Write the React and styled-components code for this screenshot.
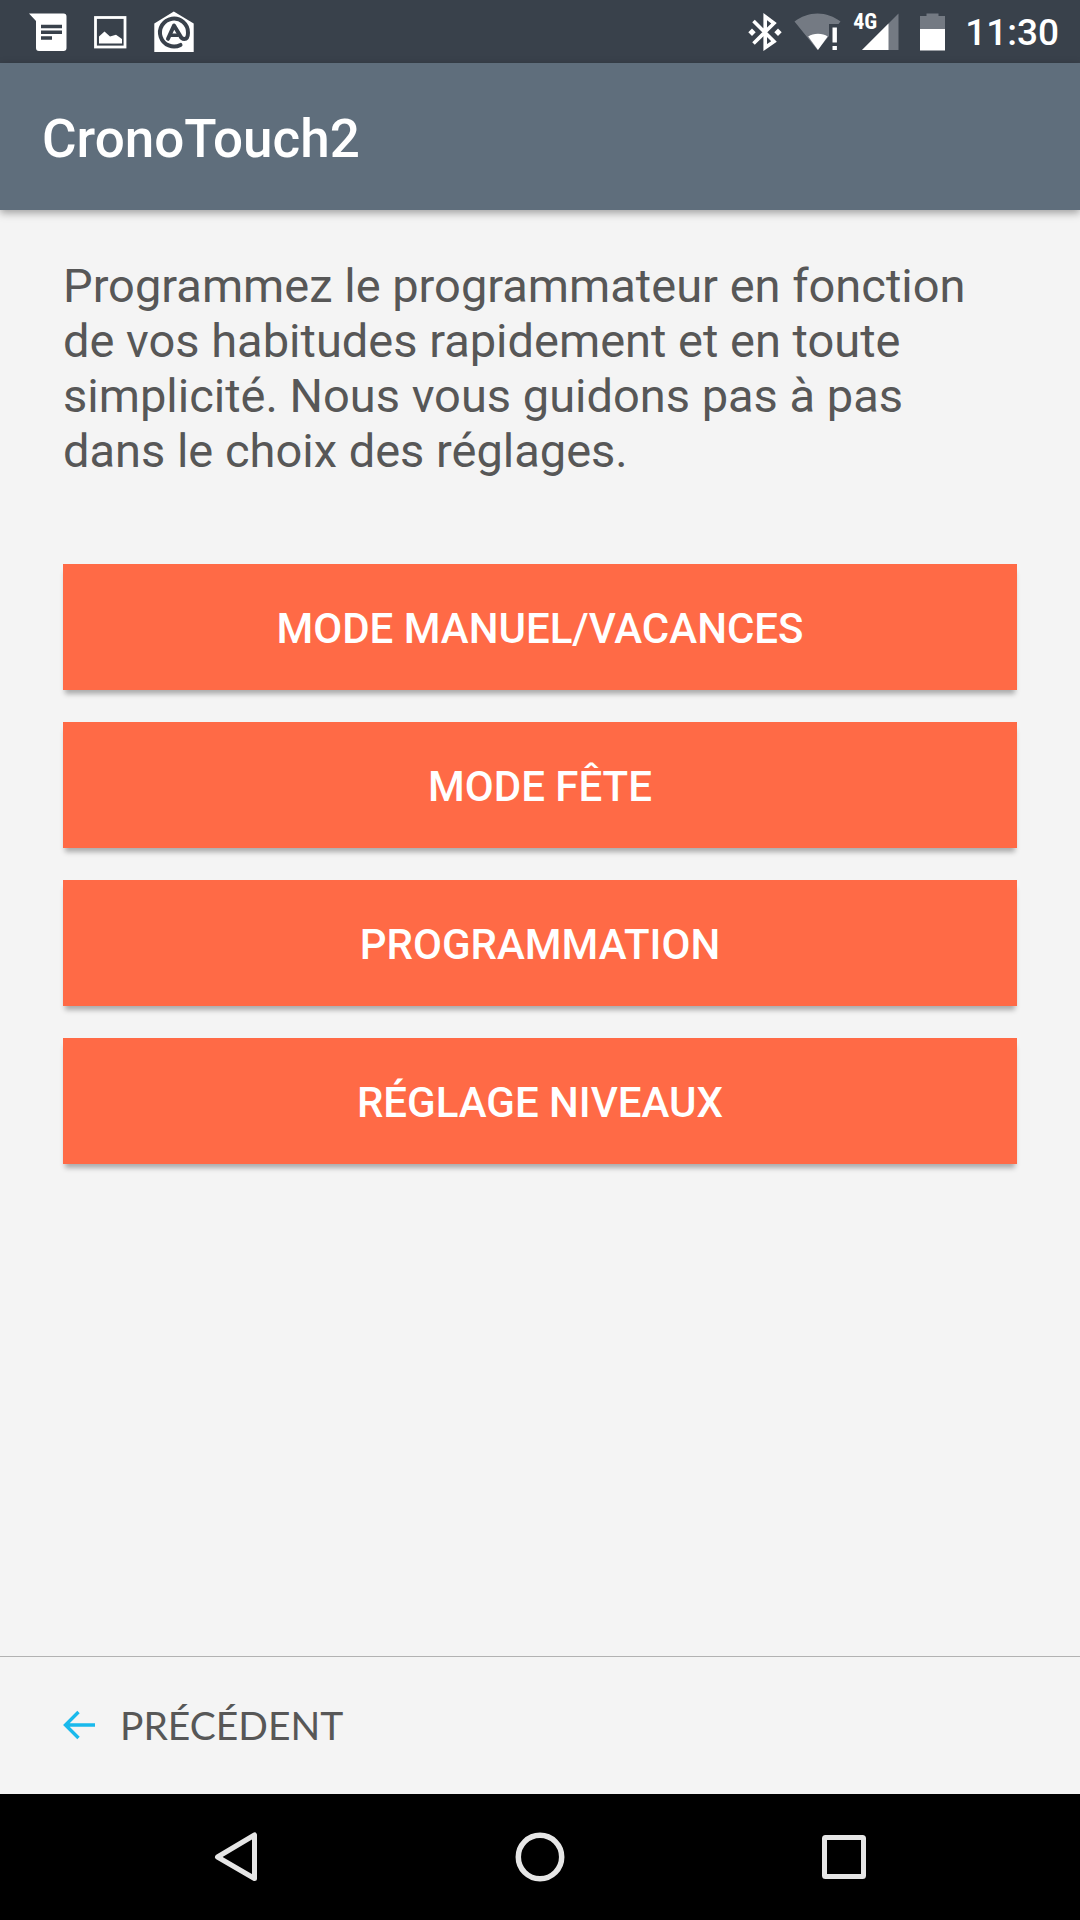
import styled, { createGlobalStyle } from "styled-components";

const GlobalStyle = createGlobalStyle`
  * {
    box-sizing: border-box;
  }

  body {
    margin: 0;
    background: #f4f4f4;
    font-family: Roboto, "Liberation Sans", sans-serif;
  }
`;

/* =======================
   MENU DATA
======================= */
const menuItems = [
  "Mode manuel/vacances",
  "Mode fête",
  "Programmation",
  "Réglage niveaux"
];

/* =======================
   STATUS BAR ICONS
======================= */
const MessageIcon = () => (
  <svg width="38" height="40" viewBox="0 0 38 40" aria-hidden="true">
    <path
      fill="#fff"
      d="M0 1.500H34.500a3 3 0 0 1 3 3V36a3 3 0 0 1-3 3H10a3 3 0 0 1-3-3V9Z"
    />
    <path stroke="#39414b" strokeWidth="3.600" d="M12 14.500h21M12 20.300h21M12 26h11" />
  </svg>
);

const PictureIcon = () => (
  <svg width="33" height="40" viewBox="0 0 33 40" aria-hidden="true">
    <rect x="1.500" y="5.500" width="29.500" height="29.500" fill="none" stroke="#fff" strokeWidth="2.800" />
    <path fill="#fff" d="M5 31.500V24.500L10.500 19.500l5.500 5 6-1.800 6 4.300V31.500Z" />
  </svg>
);

const MailIcon = () => (
  <svg width="40" height="42" viewBox="0 0 40 42" aria-hidden="true">
    <path fill="#fff" d="M0.300 12.500 19.800 0.500 39.700 12.500V41H0.300Z" />
    <g fill="none" stroke="#39414b" strokeWidth="4" strokeLinecap="round" strokeLinejoin="round">
      <path d="M26.500 33.900A14 14 0 1 1 34 21.700c0 4-1.300 6.200-3.700 6.200-2 0-3.300-1.200-4.100-3.200L20 14.500 14 27.800" />
      <path strokeWidth="3.500" d="M17 24.300h7" />
    </g>
  </svg>
);

const BluetoothIcon = () => (
  <svg width="34" height="38" viewBox="0 0 34 38" aria-hidden="true">
    <path
      fill="none"
      stroke="#fff"
      strokeWidth="3.600"
      d="M5.500 8 26 28.500 17.200 34.600V3.600L26 10.200 5.500 30.500"
    />
    <path fill="#fff" d="M0.300 19.200 4 15.500l3.700 3.700L4 22.900ZM26.300 19.200l3.700-3.700 3.700 3.700L30 22.900Z" />
  </svg>
);

const WifiIcon = () => (
  <svg width="47" height="38" viewBox="0 0 47 38" aria-hidden="true">
    <path fill="#747a83" d="M0.500 8.500C7 3.500 15 0.500 23.500 0.500S40 3.500 46.500 8.500L44.500 11H35V23L23.500 37Z" />
    <path fill="#fff" d="M14.200 23.500C17 21.500 20 20.700 24 20.700s7 0.800 9.700 2.800L24 37Z" />
    <path fill="#fff" d="M38.500 14.500h4.400V29.500h-4.400ZM38.500 33h4.400v4h-4.400Z" />
  </svg>
);

const CellIcon = () => (
  <svg width="38" height="38" viewBox="0 0 38 38" aria-hidden="true">
    <path fill="#747a83" d="M37.500 0.500V37H1Z" />
    <path fill="#fff" d="M27.500 10.500V37H1Z" />
  </svg>
);

const BatteryIcon = () => (
  <svg width="42" height="38" viewBox="0 0 42 38" aria-hidden="true">
    <path fill="#747a83" d="M9 3h6.500V0.500h12V3H34v14H9Z" />
    <path fill="#fff" d="M9 16h25v21.500H9Z" />
  </svg>
);

const ArrowIcon = () => (
  <svg width="33" height="30" viewBox="0 0 33 30" aria-hidden="true">
    <path fill="none" stroke="#19b9ec" strokeWidth="3.400" d="M15.500 2 2.500 15l13 13M2.500 15H32" />
  </svg>
);

/* =======================
   NAVIGATION BAR ICONS
======================= */
const BackIcon = () => (
  <svg width="50" height="50" viewBox="0 0 50 50" aria-hidden="true">
    <path
      fill="none"
      stroke="#e6e6e6"
      strokeWidth="5"
      strokeLinejoin="round"
      d="M43.500 3V46.500L6.500 25Z"
    />
  </svg>
);

const HomeIcon = () => (
  <svg width="50" height="50" viewBox="0 0 50 50" aria-hidden="true">
    <circle cx="25" cy="25" r="21.700" fill="none" stroke="#e6e6e6" strokeWidth="5.500" />
  </svg>
);

const RecentIcon = () => (
  <svg width="50" height="50" viewBox="0 0 50 50" aria-hidden="true">
    <rect
      x="5.500"
      y="5.500"
      width="39"
      height="39"
      rx="1"
      fill="none"
      stroke="#e6e6e6"
      strokeWidth="5"
    />
  </svg>
);

/* =======================
   COMPONENT
======================= */
const App = () => {
  return (
    <Page>
      <GlobalStyle />

      <StatusBar>
        <Notifications>
          <MessageIcon />
          <PictureIcon />
          <MailIcon />
        </Notifications>
        <SystemIcons>
          <BluetoothIcon />
          <WifiIcon />
          <Signal>
            <CellIcon />
            <NetworkType>4G</NetworkType>
          </Signal>
          <BatteryIcon />
          <Clock>11:30</Clock>
        </SystemIcons>
      </StatusBar>

      <AppBar>
        <Title>CronoTouch2</Title>
      </AppBar>

      <Content>
        <Intro>
          Programmez le programmateur en fonction de vos habitudes rapidement et
          en toute simplicité. Nous vous guidons pas à pas dans le choix des
          réglages.
        </Intro>

        <Menu>
          {menuItems.map((item) => (
            <MenuButton key={item} type="button">
              {item}
            </MenuButton>
          ))}
        </Menu>
      </Content>

      <Footer>
        <PreviousButton type="button">
          <ArrowIcon />
          Précédent
        </PreviousButton>
      </Footer>

      <NavBar>
        <NavKeys>
          <NavKey type="button" aria-label="Retour">
            <BackIcon />
          </NavKey>
          <NavKey type="button" aria-label="Accueil">
            <HomeIcon />
          </NavKey>
          <NavKey type="button" aria-label="Applications récentes">
            <RecentIcon />
          </NavKey>
        </NavKeys>
      </NavBar>
    </Page>
  );
};

export default App;

/* =======================
   STYLED COMPONENTS
======================= */
const Page = styled.div`
  min-height: 100vh;
  display: flex;
  flex-direction: column;
  background: #f4f4f4;
`;

const StatusBar = styled.div`
  height: 63px;
  padding: 0 21px 0 29px;
  display: flex;
  align-items: center;
  justify-content: space-between;
  background: #39414b;
  color: #ffffff;

  svg {
    display: block;
  }
`;

const Notifications = styled.div`
  display: flex;
  align-items: center;
  gap: 27px;
`;

const SystemIcons = styled.div`
  display: flex;
  align-items: center;
  gap: 12px;
`;

const Signal = styled.div`
  position: relative;
  padding-left: 8px;
`;

const NetworkType = styled.span`
  position: absolute;
  top: 0;
  left: 0;
  font-family: "Roboto Condensed", "Liberation Sans Narrow", Roboto, sans-serif;
  font-size: 22px;
  font-weight: 700;
  line-height: 18px;
`;

const Clock = styled.time`
  padding-top: 2px;
  font-size: 37px;
  font-weight: 500;
  line-height: 40px;
`;

const AppBar = styled.header`
  height: 147px;
  padding: 4px 42px 0;
  display: flex;
  align-items: center;
  background: #5f6e7c;
  box-shadow: 0 3px 8px rgba(0, 0, 0, 0.35);
`;

const Title = styled.h1`
  margin: 0;
  color: #ffffff;
  font-size: 53px;
  font-weight: 500;
  line-height: 62px;
`;

const Content = styled.main`
  flex: 1;
  padding: 48px 63px;
`;

const Intro = styled.p`
  margin: 0;
  padding-right: 16px;
  color: #575757;
  font-size: 47px;
  line-height: 55px;
`;

const Menu = styled.div`
  margin-top: 86px;
  display: flex;
  flex-direction: column;
  gap: 32px;
`;

const MenuButton = styled.button`
  height: 126px;
  padding: 4px 20px 0;
  border: none;
  background: #ff6a46;
  box-shadow: 0 6px 5px -2px rgba(0, 0, 0, 0.3);
  color: #ffffff;
  font-family: inherit;
  font-size: 42px;
  font-weight: 500;
  line-height: 50px;
  text-transform: uppercase;
  cursor: pointer;
`;

const Footer = styled.footer`
  height: 138px;
  padding: 0 63px 2px;
  display: flex;
  align-items: center;
  border-top: 1px solid #b2b2b2;
`;

const PreviousButton = styled.button`
  padding: 0;
  display: flex;
  align-items: center;
  gap: 24px;
  border: none;
  background: none;
  color: #575757;
  font-family: Lato, sans-serif;
  font-size: 39px;
  line-height: 48px;
  text-transform: uppercase;
  cursor: pointer;
`;

const NavBar = styled.nav`
  height: 126px;
  display: flex;
  justify-content: center;
  background: #000000;
`;

const NavKeys = styled.div`
  width: 100%;
  max-width: 912px;
  display: flex;
`;

const NavKey = styled.button`
  flex: 1;
  padding: 0;
  display: flex;
  align-items: center;
  justify-content: center;
  border: none;
  background: none;
  cursor: pointer;
`;
